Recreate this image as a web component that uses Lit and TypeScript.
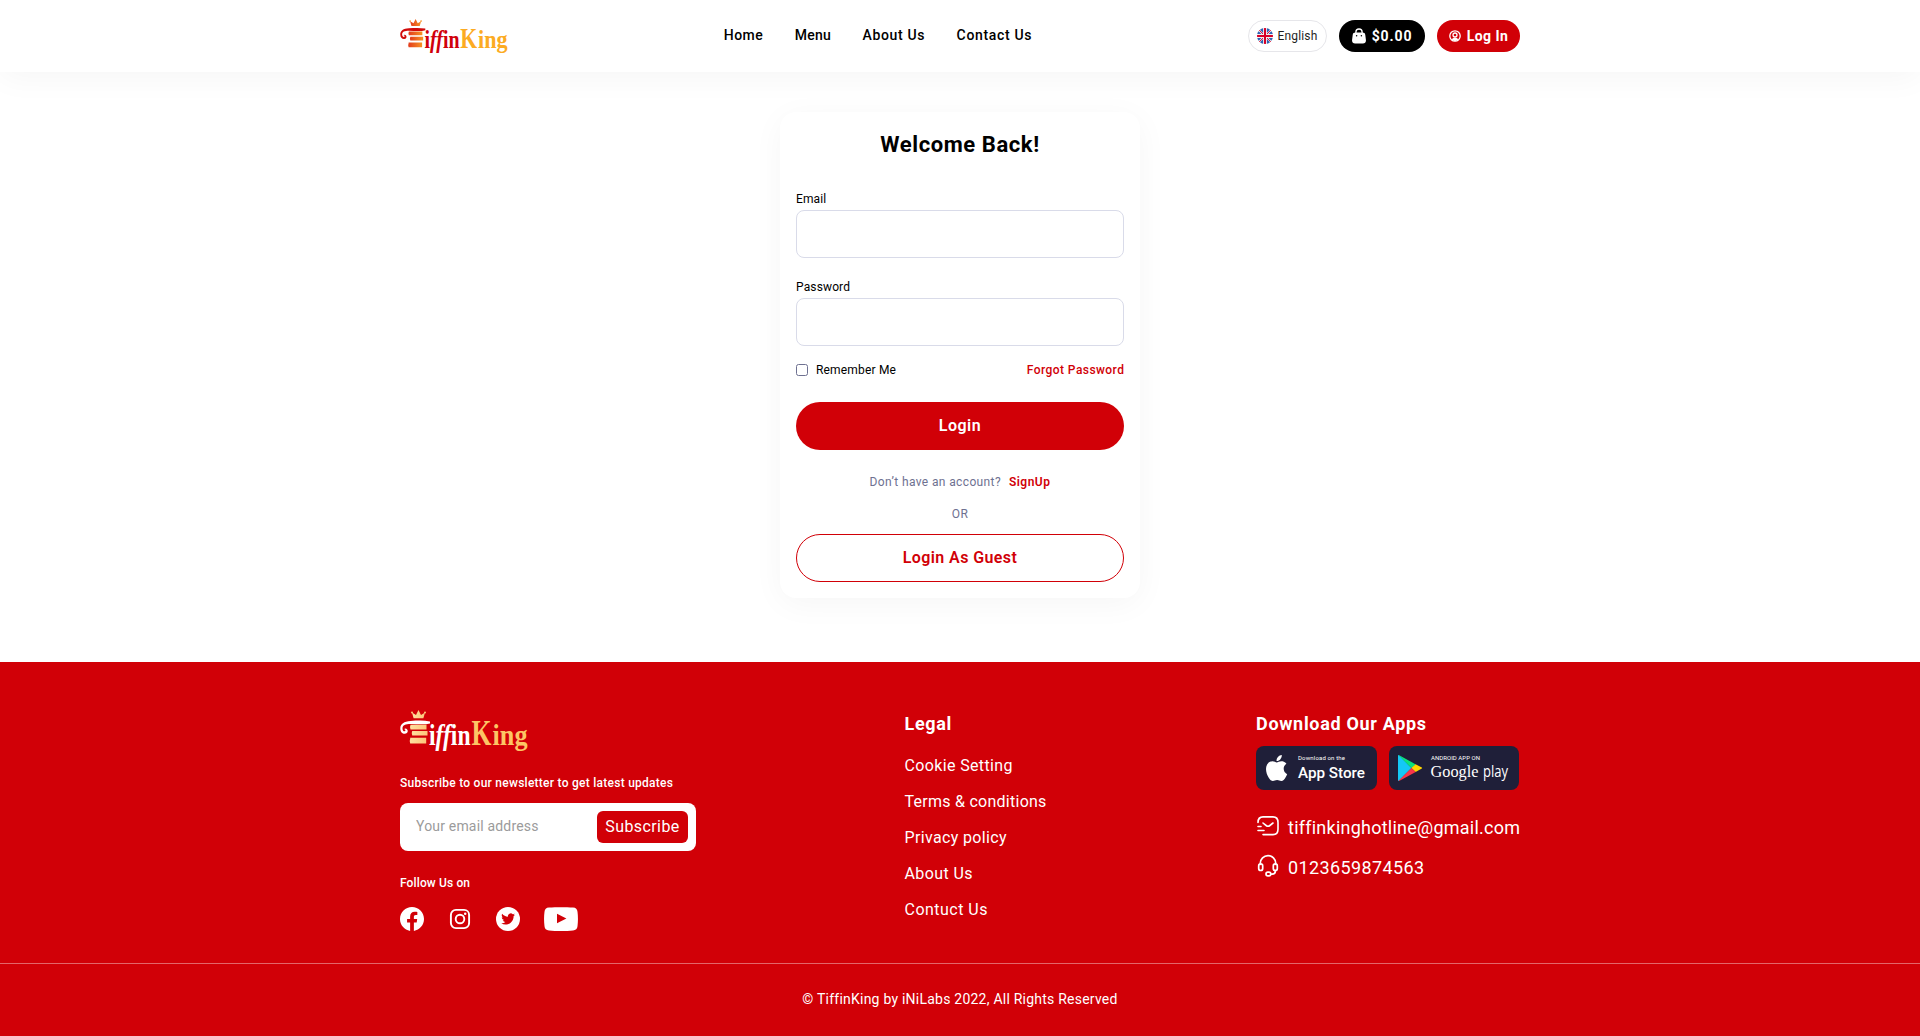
import { LitElement, html, css, svg } from 'lit';
import { customElement, property } from 'lit/decorators.js';

interface Label {
  text: string;
  spacing: number;
}

const NAV: Label[] = [
  { text: 'Home', spacing: 0.47 },
  { text: 'Menu', spacing: 0.23 },
  { text: 'About Us', spacing: 0.65 },
  { text: 'Contact Us', spacing: 0.67 },
];

const LEGAL: Label[] = [
  { text: 'Cookie Setting', spacing: 0.36 },
  { text: 'Terms & conditions', spacing: 0.26 },
  { text: 'Privacy policy', spacing: 0.35 },
  { text: 'About Us', spacing: 0.4 },
  { text: 'Contuct Us', spacing: 0.48 },
];

const track = (l: Label) => html`<span style="letter-spacing:${l.spacing}px">${l.text}</span>`;

const flagIcon = html`<svg width="16" height="16" viewBox="0 0 16 16">
  <defs><clipPath id="disc"><circle cx="8" cy="8" r="8" /></clipPath></defs>
  <g clip-path="url(#disc)">
    <rect width="16" height="16" fill="#f0f0f0" />
    <path d="M1.2 0h4.9v4.9zM0 1.6v4.5h4.5zM14.8 0H9.9v4.9zM16 1.6v4.5h-4.5zM1.2 16h4.9v-4.9zM0 14.4V9.9h4.5zM14.8 16H9.9v-4.9zM16 14.4V9.9h-4.5z" fill="#2f62b5" />
    <path d="M0 7h16v2H0zM7 0h2v16H7z" fill="#d80027" />
    <path d="M10 10l4 4M6 6L2 2M10 6l4-4M6 10l-4 4" stroke="#d80027" stroke-width=".9" />
  </g>
</svg>`;

const bagIcon = html`<svg width="14" height="16" viewBox="0 0 14 16">
  <path d="M3.9 6V4.1a3.1 3.1 0 0 1 6.2 0V6" fill="none" stroke="#fff" stroke-width="1.3" />
  <path d="M3.4 4.600h7.200c1.500 0 2.500.8 2.700 2.300l.6 4.900c.3 2.200-.9 3.700-3 3.700H3.100c-2.100 0-3.300-1.500-3-3.700l.6-4.900c.2-1.500 1.200-2.300 2.700-2.300z" fill="#fff" />
  <circle cx="4.600" cy="7.700" r=".75" fill="#000" />
  <circle cx="9.400" cy="7.700" r=".75" fill="#000" />
</svg>`;

const userIcon = html`<svg width="12" height="12" viewBox="0 0 12 12" fill="none" stroke="#fff">
  <circle cx="6" cy="6" r="5.200" stroke-width="1.300" />
  <circle cx="6" cy="5" r="2" stroke-width="1.300" />
  <path d="M2.600 9.600c.7-1.400 1.900-1.900 3.400-1.900s2.700.5 3.400 1.900L6 11.200z" fill="#fff" stroke="none" />
</svg>`;

const facebookIcon = html`<svg width="24" height="24" viewBox="0 0 24 24" fill="#fff">
  <path d="M24 12.073c0-6.627-5.373-12-12-12s-12 5.373-12 12c0 5.990 4.388 10.954 10.125 11.854v-8.385H7.078v-3.470h3.047V9.430c0-3.007 1.792-4.669 4.533-4.669 1.312 0 2.686.235 2.686.235v2.953H15.830c-1.491 0-1.956.925-1.956 1.874v2.250h3.328l-.532 3.470h-2.796v8.385C19.612 23.027 24 18.062 24 12.073z" />
</svg>`;

const instagramIcon = html`<svg width="24" height="24" viewBox="0 0 24 24" fill="none" stroke="#fff">
  <rect x="2.900" y="2.900" width="18.200" height="18.200" rx="5" stroke-width="1.900" />
  <circle cx="12" cy="12" r="4.300" stroke-width="1.900" />
  <circle cx="17.200" cy="6.800" r="1.250" fill="#fff" stroke="none" />
</svg>`;

const twitterIcon = html`<svg width="24" height="24" viewBox="0 0 24 24">
  <circle cx="12" cy="12" r="12" fill="#fff" />
  <path transform="translate(5.200 5) scale(.575)" fill="#d10007" d="M23.953 4.570a10 10 0 01-2.825.775 4.958 4.958 0 002.163-2.723c-.951.555-2.005.959-3.127 1.184a4.920 4.920 0 00-8.384 4.482C7.690 8.095 4.067 6.130 1.640 3.162a4.822 4.822 0 00-.666 2.475c0 1.710.87 3.213 2.188 4.096a4.904 4.904 0 01-2.228-.616v.06a4.923 4.923 0 003.946 4.827 4.996 4.996 0 01-2.212.085 4.936 4.936 0 004.604 3.417 9.867 9.867 0 01-6.102 2.105c-.39 0-.779-.023-1.170-.067a13.995 13.995 0 007.557 2.209c9.053 0 13.998-7.496 13.998-13.985 0-.21 0-.42-.015-.63A9.935 9.935 0 0024 4.590z" />
</svg>`;

const youtubeIcon = html`<svg width="34" height="24" viewBox="0 0 34 24">
  <path d="M5 .6C12 0 22 0 29 .6c2.900.2 4.200 1.400 4.500 4.200.6 4.800.6 9.600 0 14.400-.3 2.800-1.600 4-4.500 4.200-7 .8-17 .8-24 0-2.900-.2-4.200-1.400-4.500-4.200-.6-4.800-.6-9.600 0-14.400C.8 2 2.100.8 5 .6z" fill="#fff" />
  <path d="M13 6.800v9.400l9.400-4.700z" fill="#d10007" />
</svg>`;

const mailIcon = html`<svg width="24" height="24" viewBox="0 0 24 24" fill="none" stroke="#fff" stroke-width="1.600" stroke-linecap="round" stroke-linejoin="round">
  <path d="M2 8.500c0-3.500 2-5.600 5-5.600h10c3 0 5 2.100 5 5.600v6.700c0 3.500-2 5.400-5 5.400H7" />
  <path d="M17 9l-3.130 2.500c-1.030.82-2.720.82-3.750 0L7 9M2 16.500h6M2 12.500h3" />
</svg>`;

const headsetIcon = html`<svg width="24" height="24" viewBox="0 0 24 24" fill="none" stroke="#fff" stroke-width="1.700" stroke-linecap="round" stroke-linejoin="round">
  <path d="M4.300 10.300V9.300a7.700 7.700 0 0 1 15.400 0v1" />
  <rect x="2.700" y="9.900" width="4" height="6.600" rx="2" />
  <rect x="17.300" y="9.900" width="4" height="6.600" rx="2" />
  <path d="M19.300 16.600v.6c0 1.700-1.300 2.900-3.200 2.900h-1.300" />
  <rect x="10" y="18.200" width="4.800" height="3.700" rx="1.850" />
</svg>`;

@customElement('brand-logo')
export class BrandLogo extends LitElement {
  @property() tone: 'color' | 'light' = 'color';
  @property({ type: Number }) width = 128;

  static styles = css`
    :host { display: block; }
    svg { display: block; overflow: visible; }
    text { font-family: "Liberation Serif", "Times New Roman", serif; font-weight: 700; }
    .it { font-style: italic; }
  `;

  render() {
    const light = this.tone === 'light';
    const swash = light ? '#fff' : '#d10a0a';
    const word = light ? '#fff' : '#d1000b';
    const king = light ? '#fdc565' : '#fcab22';
    const from = light ? '#fee0a0' : '#e23a1c';
    const to = light ? '#fdc67a' : '#f79322';
    const bars = [[10.5, 14.8, 16], [12.200, 21, 15.300], [10.200, 27.800, 16]];
    return html`<svg width=${this.width} height=${(this.width * 42) / 128} viewBox="0 0 128 42">
      <defs>
        <linearGradient id="bar"><stop stop-color=${from} /><stop offset="1" stop-color=${to} /></linearGradient>
      </defs>
      <path d="M13.600 8.200L12 2.600l4 2.400L18.500 0l2.500 5 4-2.400-1.600 5.600z" fill="url(#bar)" />
      <circle cx="12" cy="2.400" r="1" fill=${to} /><circle cx="25" cy="2.400" r="1" fill=${to} />
      <path d="M30 11.400c-7-1.300-13-.7-19.500-.5C4 11.200.3 13.800.3 18.400c0 3.600 2.200 5.600 4.700 5.400 2.400-.2 3.500-2.600 2.200-4.300-.9-1.200-2.500-1.200-3.200-.2.900-.1 1.500.5 1.400 1.300-.2 1.100-2.900 1-2.900-2.200 0-3.200 3-4.400 8-4.400 7 0 13.500 1.100 19.500-.6z" fill=${swash} />
      ${bars.map(([x, y, w], i) => svg`<path d="M${x} ${y}h${w}v${i === 2 ? 5.6 : 4.6}h${-w}q-1 -2.300 0 -4.600z" fill="url(#bar)" />`)}
      <text x="29" y="34.500" font-size="30" fill=${word} textLength="41.500" lengthAdjust="spacingAndGlyphs">i<tspan class="it">ff</tspan>in</text>
      <text x="71.500" y="34.500" font-size="35" fill=${king} textLength="20" lengthAdjust="spacingAndGlyphs">K</text>
      <text x="92.500" y="34.500" font-size="29" fill=${king} textLength="35" lengthAdjust="spacingAndGlyphs">ing</text>
    </svg>`;
  }
}

@customElement('app-header')
export class AppHeader extends LitElement {
  static styles = css`
    :host { display: block; position: relative; background: #fff; box-shadow: 0 6px 32px rgba(0, 0, 0, 0.04); }
    .bar { width: 1120px; height: 72px; margin: 0 auto; display: flex; align-items: center; justify-content: space-between; }
    nav { display: flex; gap: 31.500px; padding-bottom: 1px; font-size: 14px; font-weight: 500; line-height: 21px; color: #000; }
    .actions { display: flex; gap: 12px; }
    .pill { box-sizing: border-box; height: 32px; border-radius: 16px; display: flex; align-items: center; justify-content: center; white-space: nowrap; }
    .lang { width: 79px; gap: 4px; border: 1px solid #e6e6ea; font-size: 12px; letter-spacing: 0.18px; color: #1f1f1f; }
    .cart { width: 86px; gap: 6px; background: #000; color: #fff; font-size: 14px; font-weight: 700; letter-spacing: 0.9px; }
    .login { width: 83px; gap: 6px; background: #d10007; color: #fff; font-size: 14px; font-weight: 700; letter-spacing: 0.42px; }
    .cart span, .login span { padding-bottom: 1px; }
    svg { display: block; flex: none; }
    brand-logo { height: 35px; }
  `;

  render() {
    return html`<div class="bar">
      <brand-logo tone="color" width="108"></brand-logo>
      <nav>${NAV.map(track)}</nav>
      <div class="actions">
        <div class="pill lang">${flagIcon}<span>English</span></div>
        <div class="pill cart">${bagIcon}<span>$0.00</span></div>
        <div class="pill login">${userIcon}<span>Log In</span></div>
      </div>
    </div>`;
  }
}

@customElement('login-card')
export class LoginCard extends LitElement {
  static styles = css`
    :host { display: block; box-sizing: border-box; width: 360px; padding: 16px; border-radius: 16px; background: #fff; box-shadow: 0 6px 32px rgba(0, 0, 0, 0.04); font-size: 12px; line-height: 18px; color: #000; }
    h1 { margin: 0 0 29px; font-size: 22px; font-weight: 700; line-height: 33px; letter-spacing: 0.58px; text-align: center; }
    label { display: block; margin-bottom: 2px; letter-spacing: 0.14px; }
    input.field { display: block; box-sizing: border-box; width: 100%; height: 48px; margin: 0 0 20px; padding: 0 12px; border: 1px solid #d9dbe9; border-radius: 8px; background: #fff; font: inherit; }
    input.last { margin-bottom: 15px; }
    .row { display: flex; align-items: center; margin-bottom: 23px; }
    .check { appearance: none; box-sizing: border-box; width: 12px; height: 12px; margin: 0 8px 0 0; border: 1px solid #6e7191; border-radius: 2.500px; background: #fff; }
    .remember { letter-spacing: 0.18px; }
    .forgot { margin-left: auto; margin-right: -0.4px; font-weight: 500; letter-spacing: 0.44px; color: #d10007; }
    button { display: block; box-sizing: border-box; width: 100%; height: 48px; padding: 0; border-radius: 24px; font: 600 16px/24px Roboto, sans-serif; letter-spacing: 0.5px; }
    .primary { border: 0; background: #d10007; color: #fff; }
    .guest { border: 1px solid #d10007; background: #fff; color: #d10007; letter-spacing: 0.4px; }
    .ask { display: flex; justify-content: center; gap: 8px; margin: 23px 0 14px; letter-spacing: 0.37px; color: #6e7191; }
    .ask b { font-weight: 600; letter-spacing: 0.48px; color: #d10007; }
    .or { margin-bottom: 11px; text-align: center; letter-spacing: 0.3px; color: #6e7191; }
  `;

  render() {
    return html`
      <h1>Welcome Back!</h1>
      <label for="email">Email</label>
      <input class="field" id="email" type="email" />
      <label for="password">Password</label>
      <input class="field last" id="password" type="password" />
      <div class="row">
        <input class="check" type="checkbox" id="remember" />
        <span class="remember">Remember Me</span>
        <span class="forgot">Forgot Password</span>
      </div>
      <button class="primary">Login</button>
      <div class="ask"><span>Don’t have an account?</span><b>SignUp</b></div>
      <div class="or">OR</div>
      <button class="guest">Login As Guest</button>
    `;
  }
}

const appStoreBadge = html`<svg width="121" height="44" viewBox="0 0 121 44">
  <rect width="121" height="44" rx="8" fill="#1f1f39" />
  <path transform="translate(7.600 9) scale(1.083)" fill="#fff" d="M12.152 6.896c-.948 0-2.415-1.078-3.960-1.040-2.040.027-3.910 1.183-4.961 3.014-2.117 3.675-.546 9.103 1.519 12.090 1.013 1.454 2.208 3.090 3.792 3.039 1.520-.065 2.090-.987 3.935-.987 1.831 0 2.350.987 3.960.948 1.637-.026 2.676-1.480 3.676-2.948 1.156-1.688 1.636-3.325 1.662-3.415-.039-.013-3.182-1.221-3.220-4.857-.026-3.040 2.480-4.494 2.597-4.559-1.429-2.090-3.623-2.324-4.390-2.376-2-.156-3.675 1.090-4.610 1.090zM15.530 3.830c.843-1.012 1.400-2.427 1.245-3.830-1.207.052-2.662.805-3.532 1.818-.78.896-1.454 2.338-1.273 3.714 1.338.104 2.715-.688 3.559-1.701" />
  <text x="42" y="14" font-size="6" fill="#fff" textLength="47">Download on the</text>
  <text x="42" y="32" font-size="14" font-weight="500" fill="#fff" textLength="67" lengthAdjust="spacingAndGlyphs">App Store</text>
</svg>`;

const playBadge = html`<svg width="130" height="44" viewBox="0 0 130 44">
  <rect width="130" height="44" rx="8" fill="#1f1f39" />
  <path d="M9 9.500v25c0 .5.400.7.800.3L22.500 22 9.800 9.200C9.400 8.800 9 9 9 9.500z" fill="#14c8f5" />
  <path d="M9.300 9l.9.200 16.600 9.200-4.300 3.600z" fill="#0be27d" />
  <path d="M26.600 18.200l6.200 3.400c.5.300.5.700 0 1l-6.200 3.400-4.300-4z" fill="#ffd600" />
  <path d="M9.300 35l13.100-13 4.300 3.900-16.600 9.100z" fill="#f7364a" />
  <text x="42" y="14" font-size="6" fill="#fff" textLength="49">ANDROID APP ON</text>
  <text class="serif" x="41.500" y="31" font-size="17.500" fill="#fff" textLength="48" lengthAdjust="spacingAndGlyphs">Google</text>
  <text class="thin" x="94" y="31" font-size="15.500" fill="#fff" textLength="25" lengthAdjust="spacingAndGlyphs">play</text>
</svg>`;

@customElement('app-footer')
export class AppFooter extends LitElement {
  static styles = css`
    :host { display: block; background: #d10007; color: #fff; }
    svg { display: block; flex: none; }
    .cols { width: 1120px; margin: 0 auto; padding: 48px 0 32px; display: flex; justify-content: space-between; align-items: flex-start; }
    .news { width: 296px; font-size: 12px; font-weight: 500; line-height: 18px; }
    brand-logo { height: 42px; margin-bottom: 22px; }
    .lead { letter-spacing: 0.26px; white-space: nowrap; }
    .form { box-sizing: border-box; height: 48px; margin: 11px 0 23px; padding: 8px 8px 8px 16px; display: flex; align-items: center; border-radius: 8px; background: #fff; }
    .form input { flex: 1; min-width: 0; padding: 0 0 1px; border: 0; background: none; font: 400 14px/21px Roboto, sans-serif; letter-spacing: 0.18px; }
    .form input::placeholder { color: #9b9b9b; opacity: 1; }
    .form button { width: 91px; height: 32px; padding: 0; border: 0; border-radius: 6px; background: #d10007; color: #fff; font: 400 16px/24px Roboto, sans-serif; letter-spacing: 0.4px; }
    .follow { letter-spacing: 0.13px; }
    .social { display: flex; gap: 24px; margin-top: 15px; }
    h2 { margin: 0; font-size: 18px; font-weight: 700; line-height: 27px; letter-spacing: 0.68px; white-space: nowrap; }
    .legal { width: 142px; }
    .legal h2, .legal ul { margin-left: -0.5px; }
    ul { list-style: none; margin: 17px 0 0; padding: 0; display: flex; flex-direction: column; gap: 12px; font-size: 16px; line-height: 24px; white-space: nowrap; }
    .apps { width: 264px; }
    .badges { display: flex; gap: 12px; margin: 9px 0 24px; }
    .badges text { font-family: Roboto, sans-serif; }
    .badges .serif { font-family: "Liberation Serif", serif; }
    .badges .thin { font-family: "Open Sans", sans-serif; font-weight: 400; }
    .contact { display: flex; gap: 8px; margin-bottom: 13px; font-size: 18px; line-height: 27px; white-space: nowrap; }
    .mail { letter-spacing: 0.24px; font-variant-ligatures: none; }
    .phone { letter-spacing: 0.39px; }
    .copy { border-top: 1px solid rgba(255, 255, 255, 0.4); padding: 24px 0 26px; text-align: center; font-size: 14px; line-height: 22px; letter-spacing: 0.23px; }
  `;

  render() {
    return html`
      <div class="cols">
        <div class="news">
          <brand-logo tone="light" width="128"></brand-logo>
          <div class="lead">Subscribe to our newsletter to get latest updates</div>
          <div class="form"><input type="text" placeholder="Your email address" /><button>Subscribe</button></div>
          <div class="follow">Follow Us on</div>
          <div class="social">${facebookIcon}${instagramIcon}${twitterIcon}${youtubeIcon}</div>
        </div>
        <div class="legal">
          <h2>Legal</h2>
          <ul>${LEGAL.map((l) => html`<li>${track(l)}</li>`)}</ul>
        </div>
        <div class="apps">
          <h2>Download Our Apps</h2>
          <div class="badges">${appStoreBadge}${playBadge}</div>
          <div class="contact">${mailIcon}<span class="mail">tiffinkinghotline@gmail.com</span></div>
          <div class="contact">${headsetIcon}<span class="phone">0123659874563</span></div>
        </div>
      </div>
      <div class="copy">© TiffinKing by iNiLabs 2022, All Rights Reserved</div>
    `;
  }
}

@customElement('app-root')
export class AppRoot extends LitElement {
  static styles = css`
    :host { display: flex; flex-direction: column; min-height: 1036px; background: #fff; font-family: Roboto, sans-serif; color: #000; }
    main { display: flex; justify-content: center; padding: 40px 0 64px; }
  `;

  render() {
    return html`
      <app-header></app-header>
      <main><login-card></login-card></main>
      <app-footer></app-footer>
    `;
  }
}
